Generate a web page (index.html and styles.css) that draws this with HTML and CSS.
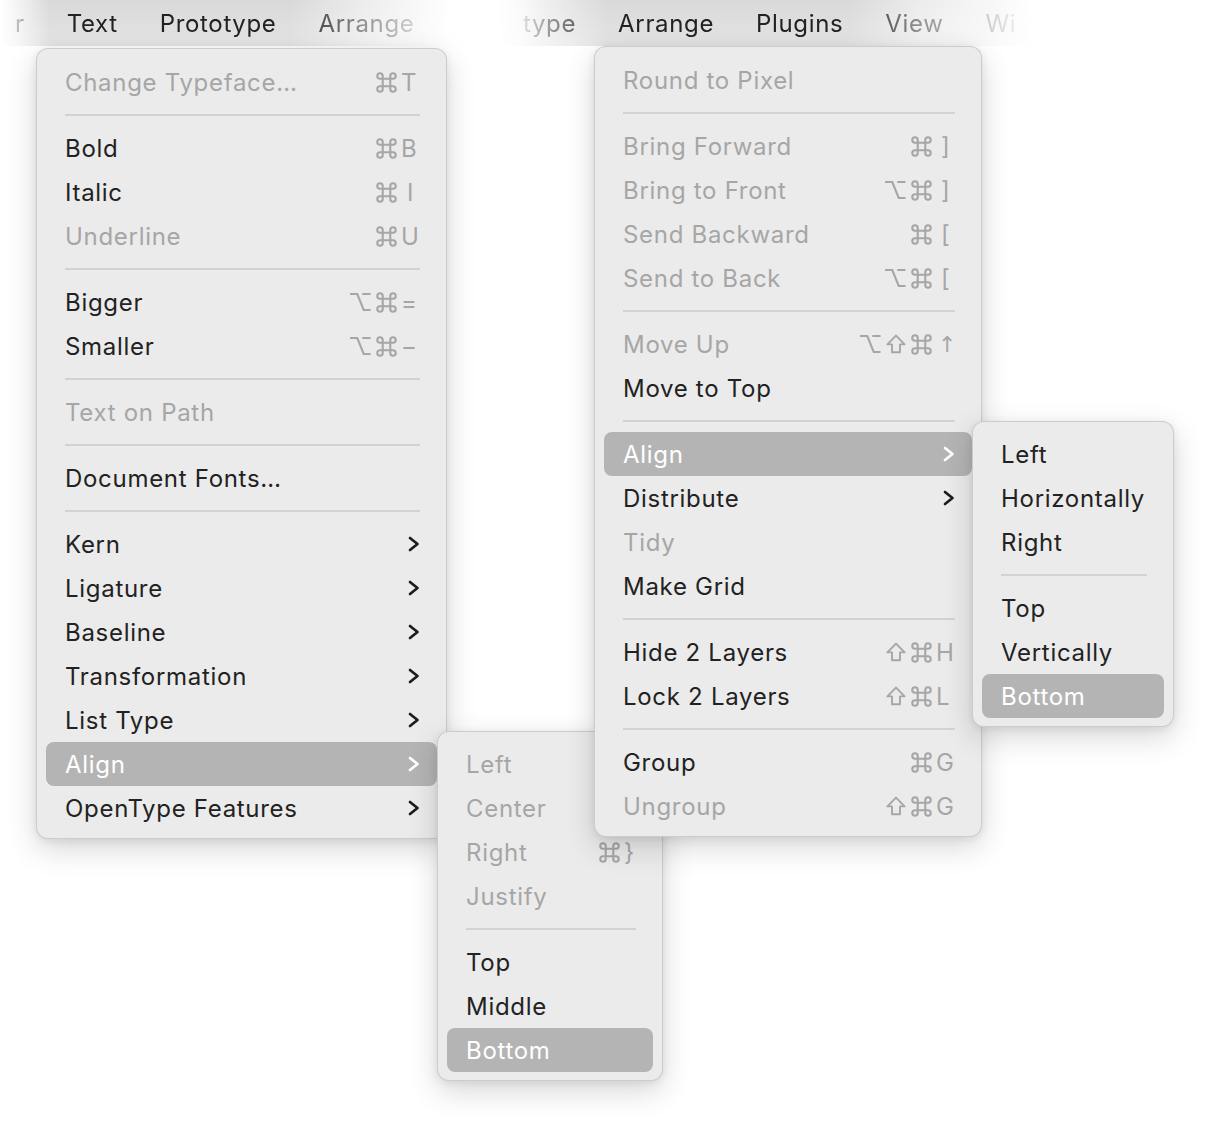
FILE: index.html
```html
<!DOCTYPE html>
<html lang="en">
<head>
<meta charset="utf-8">
<title>Menus</title>
<link rel="stylesheet" href="styles.css">
</head>
<body>
<svg class="defs" width="0" height="0" aria-hidden="true">
  <defs>
    <symbol id="cmd" viewBox="0 0 20 20"><path d="M6.4 13.6 V3.8 A2.6 2.6 0 1 0 3.8 6.4 H16.2 A2.6 2.6 0 1 0 13.6 3.8 V16.2 A2.6 2.6 0 1 0 16.2 13.6 H3.8 A2.6 2.6 0 1 0 6.4 16.2 Z"/></symbol>
    <symbol id="opt" viewBox="0 0 21 20"><path d="M0.5 2 H7.8 L14.2 18 H21 M12.8 2 H21"/></symbol>
    <symbol id="shift" viewBox="0 0 20 20"><path d="M10 1.6 L18.6 10.4 H14 V18.2 H6 V10.4 H1.4 Z"/></symbol>
  </defs>
</svg>
<div class="canvas">
  <div class="menubar bar-left">
    <span class="mb">r</span><span class="mb">Text</span><span class="mb">Prototype</span><span class="mb">Arrange</span>
  </div>
  <div class="menubar bar-right">
    <span class="mb">type</span><span class="mb">Arrange</span><span class="mb">Plugins</span><span class="mb">View</span><span class="mb">Wi</span>
  </div>

  <div class="menu menu-text">
    <div class="item off"><span class="label">Change Typeface…</span><span class="sc"><span class="mods"><svg class="mk mk-cmd" role="img" aria-label="⌘"><use href="#cmd"/></svg></span><span class="key">T</span></span></div>
    <div class="sep"></div>
    <div class="item"><span class="label">Bold</span><span class="sc"><span class="mods"><svg class="mk mk-cmd" role="img" aria-label="⌘"><use href="#cmd"/></svg></span><span class="key">B</span></span></div>
    <div class="item"><span class="label">Italic</span><span class="sc"><span class="mods"><svg class="mk mk-cmd" role="img" aria-label="⌘"><use href="#cmd"/></svg></span><span class="key key-i">I</span></span></div>
    <div class="item off"><span class="label">Underline</span><span class="sc"><span class="mods"><svg class="mk mk-cmd" role="img" aria-label="⌘"><use href="#cmd"/></svg></span><span class="key">U</span></span></div>
    <div class="sep"></div>
    <div class="item"><span class="label">Bigger</span><span class="sc"><span class="mods"><svg class="mk mk-opt" role="img" aria-label="⌥"><use href="#opt"/></svg><svg class="mk mk-cmd" role="img" aria-label="⌘"><use href="#cmd"/></svg></span><span class="key">=</span></span></div>
    <div class="item"><span class="label">Smaller</span><span class="sc"><span class="mods"><svg class="mk mk-opt" role="img" aria-label="⌥"><use href="#opt"/></svg><svg class="mk mk-cmd" role="img" aria-label="⌘"><use href="#cmd"/></svg></span><span class="key">−</span></span></div>
    <div class="sep"></div>
    <div class="item off"><span class="label">Text on Path</span></div>
    <div class="sep"></div>
    <div class="item"><span class="label">Document Fonts…</span></div>
    <div class="sep"></div>
    <div class="item"><span class="label">Kern</span><svg class="chev" viewBox="0 0 12 16"><polyline points="2,2 9.5,8 2,14"/></svg></div>
    <div class="item"><span class="label">Ligature</span><svg class="chev" viewBox="0 0 12 16"><polyline points="2,2 9.5,8 2,14"/></svg></div>
    <div class="item"><span class="label">Baseline</span><svg class="chev" viewBox="0 0 12 16"><polyline points="2,2 9.5,8 2,14"/></svg></div>
    <div class="item"><span class="label">Transformation</span><svg class="chev" viewBox="0 0 12 16"><polyline points="2,2 9.5,8 2,14"/></svg></div>
    <div class="item"><span class="label">List Type</span><svg class="chev" viewBox="0 0 12 16"><polyline points="2,2 9.5,8 2,14"/></svg></div>
    <div class="item hl"><span class="label">Align</span><svg class="chev" viewBox="0 0 12 16"><polyline points="2,2 9.5,8 2,14"/></svg></div>
    <div class="item"><span class="label">OpenType Features</span><svg class="chev" viewBox="0 0 12 16"><polyline points="2,2 9.5,8 2,14"/></svg></div>
  </div>

  <div class="menu sub-text">
    <div class="item off"><span class="label">Left</span></div>
    <div class="item off"><span class="label">Center</span></div>
    <div class="item off"><span class="label">Right</span><span class="sc"><span class="mods"><svg class="mk mk-cmd" role="img" aria-label="⌘"><use href="#cmd"/></svg></span><span class="key key-sub">}</span></span></div>
    <div class="item off"><span class="label">Justify</span></div>
    <div class="sep"></div>
    <div class="item"><span class="label">Top</span></div>
    <div class="item"><span class="label">Middle</span></div>
    <div class="item hl"><span class="label">Bottom</span></div>
  </div>

  <div class="menu menu-arrange">
    <div class="item off"><span class="label">Round to Pixel</span></div>
    <div class="sep"></div>
    <div class="item off"><span class="label">Bring Forward</span><span class="sc"><span class="mods"><svg class="mk mk-cmd" role="img" aria-label="⌘"><use href="#cmd"/></svg></span><span class="key key-br">]</span></span></div>
    <div class="item off"><span class="label">Bring to Front</span><span class="sc"><span class="mods"><svg class="mk mk-opt" role="img" aria-label="⌥"><use href="#opt"/></svg><svg class="mk mk-cmd" role="img" aria-label="⌘"><use href="#cmd"/></svg></span><span class="key key-br">]</span></span></div>
    <div class="item off"><span class="label">Send Backward</span><span class="sc"><span class="mods"><svg class="mk mk-cmd" role="img" aria-label="⌘"><use href="#cmd"/></svg></span><span class="key key-br">[</span></span></div>
    <div class="item off"><span class="label">Send to Back</span><span class="sc"><span class="mods"><svg class="mk mk-opt" role="img" aria-label="⌥"><use href="#opt"/></svg><svg class="mk mk-cmd" role="img" aria-label="⌘"><use href="#cmd"/></svg></span><span class="key key-br">[</span></span></div>
    <div class="sep"></div>
    <div class="item off"><span class="label">Move Up</span><span class="sc"><span class="mods"><svg class="mk mk-opt" role="img" aria-label="⌥"><use href="#opt"/></svg><svg class="mk mk-shift" role="img" aria-label="⇧"><use href="#shift"/></svg><svg class="mk mk-cmd" role="img" aria-label="⌘"><use href="#cmd"/></svg></span><span class="key key-arrow">↑</span></span></div>
    <div class="item"><span class="label">Move to Top</span></div>
    <div class="sep"></div>
    <div class="item hl"><span class="label">Align</span><svg class="chev" viewBox="0 0 12 16"><polyline points="2,2 9.5,8 2,14"/></svg></div>
    <div class="item"><span class="label">Distribute</span><svg class="chev" viewBox="0 0 12 16"><polyline points="2,2 9.5,8 2,14"/></svg></div>
    <div class="item off"><span class="label">Tidy</span></div>
    <div class="item"><span class="label">Make Grid</span></div>
    <div class="sep"></div>
    <div class="item"><span class="label">Hide 2 Layers</span><span class="sc"><span class="mods"><svg class="mk mk-shift" role="img" aria-label="⇧"><use href="#shift"/></svg><svg class="mk mk-cmd" role="img" aria-label="⌘"><use href="#cmd"/></svg></span><span class="key">H</span></span></div>
    <div class="item"><span class="label">Lock 2 Layers</span><span class="sc"><span class="mods"><svg class="mk mk-shift" role="img" aria-label="⇧"><use href="#shift"/></svg><svg class="mk mk-cmd" role="img" aria-label="⌘"><use href="#cmd"/></svg></span><span class="key">L</span></span></div>
    <div class="sep"></div>
    <div class="item"><span class="label">Group</span><span class="sc"><span class="mods"><svg class="mk mk-cmd" role="img" aria-label="⌘"><use href="#cmd"/></svg></span><span class="key">G</span></span></div>
    <div class="item off"><span class="label">Ungroup</span><span class="sc"><span class="mods"><svg class="mk mk-shift" role="img" aria-label="⇧"><use href="#shift"/></svg><svg class="mk mk-cmd" role="img" aria-label="⌘"><use href="#cmd"/></svg></span><span class="key">G</span></span></div>
  </div>

  <div class="menu sub-arrange">
    <div class="item"><span class="label">Left</span></div>
    <div class="item"><span class="label">Horizontally</span></div>
    <div class="item"><span class="label">Right</span></div>
    <div class="sep"></div>
    <div class="item"><span class="label">Top</span></div>
    <div class="item"><span class="label">Vertically</span></div>
    <div class="item hl"><span class="label">Bottom</span></div>
  </div>
</div>
</body>
</html>
```

FILE: styles.css
```css
html, body {
  margin: 0;
  padding: 0;
  background: #ffffff;
}

body {
  font-family: "Inter", "Noto Sans", sans-serif;
  color: #222222;
}

.defs {
  position: absolute;
  width: 0;
  height: 0;
  overflow: hidden;
}

.canvas {
  position: relative;
  width: 1211px;
  height: 1127px;
  overflow: hidden;
}

/* menu bars */
.menubar {
  position: absolute;
  top: 0;
  height: 46px;
  display: flex;
  align-items: center;
  gap: 42px;
  font-size: 24px;
  letter-spacing: 0.65px;
  color: #222222;
  background: linear-gradient(#d9d9d9, #e4e4e4);
  white-space: nowrap;
  overflow: hidden;
  box-sizing: border-box;
}

.bar-left {
  left: 0;
  width: 452px;
  padding-left: 15px;
  -webkit-mask-image: linear-gradient(90deg, rgba(0,0,0,0) 0px, rgba(0,0,0,0.3) 18px, #000 50px, #000 290px, rgba(0,0,0,0.45) 370px, rgba(0,0,0,0) 452px);
  mask-image: linear-gradient(90deg, rgba(0,0,0,0) 0px, rgba(0,0,0,0.3) 18px, #000 50px, #000 290px, rgba(0,0,0,0.45) 370px, rgba(0,0,0,0) 452px);
}

.bar-right {
  left: 498px;
  width: 540px;
  padding-left: 25px;
  -webkit-mask-image: linear-gradient(90deg, rgba(0,0,0,0) 0px, rgba(0,0,0,0.15) 25px, rgba(0,0,0,0.45) 50px, #000 110px, #000 350px, rgba(0,0,0,0.5) 420px, rgba(0,0,0,0.2) 495px, rgba(0,0,0,0) 535px);
  mask-image: linear-gradient(90deg, rgba(0,0,0,0) 0px, rgba(0,0,0,0.15) 25px, rgba(0,0,0,0.45) 50px, #000 110px, #000 350px, rgba(0,0,0,0.5) 420px, rgba(0,0,0,0.2) 495px, rgba(0,0,0,0) 535px);
}

/* menus */
.menu {
  position: absolute;
  box-sizing: border-box;
  display: flex;
  flex-direction: column;
  padding: 11px 9px 8px 9px;
  background: #ebebeb;
  border: 1px solid rgba(0, 0, 0, 0.13);
  border-radius: 12px;
  box-shadow: 0 10px 30px rgba(0, 0, 0, 0.16), 0 2px 8px rgba(0, 0, 0, 0.08);
  font-size: 24px;
  letter-spacing: 0.7px;
}

.menu-text   { left: 36px;  top: 48px;  width: 411px; z-index: 1; }
.sub-text    { left: 437px; top: 731px; width: 226px; z-index: 2; padding-top: 10px; }
.menu-arrange{ left: 594px; top: 46px;  width: 388px; z-index: 3; }
.sub-arrange { left: 972px; top: 421px; width: 202px; z-index: 4; padding-top: 10px; }

.item {
  height: 44px;
  display: flex;
  align-items: center;
  justify-content: space-between;
  padding: 0 17px 0 19px;
  border-radius: 8px;
  color: #222222;
  white-space: nowrap;
}

.item.off {
  color: #a6a6a6;
}

.item.hl {
  background: #b4b4b4;
  color: #ffffff;
}

.sep {
  height: 2px;
  margin: 10px 17px 10px 19px;
  background: #d3d3d3;
}

/* shortcuts */
.sc {
  display: flex;
  align-items: center;
  color: #a6a6a6;
  letter-spacing: 0;
}

.mods {
  display: flex;
  align-items: center;
  gap: 5px;
  margin-right: 4px;
}

.mk {
  display: block;
  fill: none;
  stroke: #a6a6a6;
  stroke-width: 2;
  stroke-linejoin: round;
}

.mk-cmd   { width: 21px; height: 21px; }
.mk-opt   { width: 22px; height: 20px; stroke-width: 2.1; stroke-linejoin: miter; }
.mk-shift { width: 20px; height: 20px; stroke-width: 1.9; }

.key {
  width: 19px;
  text-align: left;
}

.key-i {
  padding-left: 6px;
  width: 13px;
}

.key-br {
  padding-left: 5px;
  width: 14px;
}

.key-sub {
  width: 12px;
}

.key-arrow {
  font-family: "DejaVu Sans", sans-serif;
  font-size: 22px;
  padding-left: 2px;
  width: 17px;
}

.chev {
  width: 12px;
  height: 16px;
  fill: none;
  stroke: #1c1c1c;
  stroke-width: 2.7;
  stroke-linecap: round;
  stroke-linejoin: round;
}

.item.hl .chev {
  stroke: #ffffff;
}
```
